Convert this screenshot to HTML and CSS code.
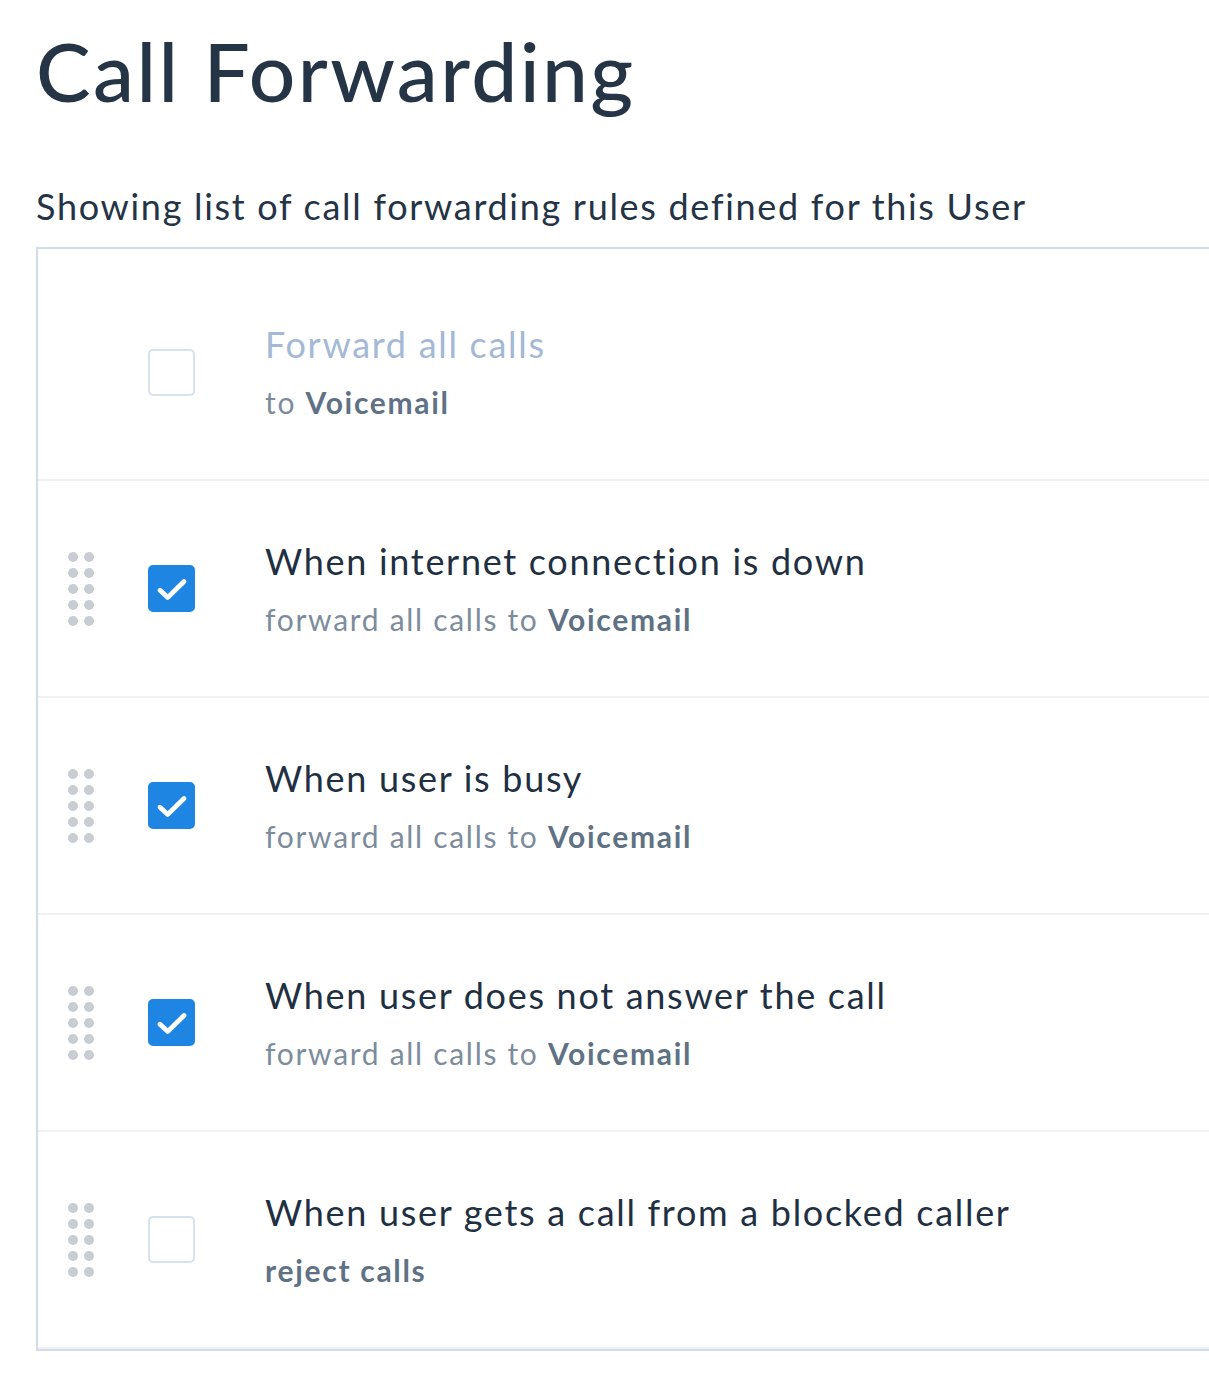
FILE: index.html
```html
<!DOCTYPE html>
<html lang="en">
<head>
    <meta charset="UTF-8">
    <meta name="viewport" content="width=device-width, initial-scale=1.0">
    <title>Call Forwarding</title>
    <link rel="stylesheet" href="styles.css">
</head>
<body>

    <header>
        <h1>Call Forwarding</h1>
        <p class="intro">Showing list of call forwarding rules defined for this User</p>
    </header>

    <section class="rules">
        <div class="rule rule-first">
            <div class="handle"></div>
            <span class="box"></span>
            <div class="text">
                <div class="title muted">Forward all calls</div>
                <div class="sub">to <b>Voicemail</b></div>
            </div>
        </div>

        <div class="rule">
            <div class="handle"><i></i><i></i><i></i><i></i><i></i><i></i><i></i><i></i><i></i><i></i></div>
            <span class="box checked">
                <svg viewBox="0 0 24 24" width="36" height="36"><polyline points="4,12.8 9.2,17.6 20,7" fill="none" stroke="#fff" stroke-width="3.2" stroke-linecap="round" stroke-linejoin="round"/></svg>
            </span>
            <div class="text">
                <div class="title">When internet connection is down</div>
                <div class="sub">forward all calls to <b>Voicemail</b></div>
            </div>
        </div>

        <div class="rule">
            <div class="handle"><i></i><i></i><i></i><i></i><i></i><i></i><i></i><i></i><i></i><i></i></div>
            <span class="box checked">
                <svg viewBox="0 0 24 24" width="36" height="36"><polyline points="4,12.8 9.2,17.6 20,7" fill="none" stroke="#fff" stroke-width="3.2" stroke-linecap="round" stroke-linejoin="round"/></svg>
            </span>
            <div class="text">
                <div class="title">When user is busy</div>
                <div class="sub">forward all calls to <b>Voicemail</b></div>
            </div>
        </div>

        <div class="rule">
            <div class="handle"><i></i><i></i><i></i><i></i><i></i><i></i><i></i><i></i><i></i><i></i></div>
            <span class="box checked">
                <svg viewBox="0 0 24 24" width="36" height="36"><polyline points="4,12.8 9.2,17.6 20,7" fill="none" stroke="#fff" stroke-width="3.2" stroke-linecap="round" stroke-linejoin="round"/></svg>
            </span>
            <div class="text">
                <div class="title">When user does not answer the call</div>
                <div class="sub">forward all calls to <b>Voicemail</b></div>
            </div>
        </div>

        <div class="rule">
            <div class="handle"><i></i><i></i><i></i><i></i><i></i><i></i><i></i><i></i><i></i><i></i></div>
            <span class="box"></span>
            <div class="text">
                <div class="title">When user gets a call from a blocked caller</div>
                <div class="sub"><b>reject calls</b></div>
            </div>
        </div>
    </section>

</body>
</html>
```

FILE: styles.css
```css
body {
    font-family: "Lato", "Open Sans", sans-serif;
    background-color: #fff;
    color: #233446;
    margin: 0;
    padding: 0 0 0 36px;
    overflow: hidden;
    letter-spacing: 1.7px;
}

h1 {
    font-size: 82px;
    font-weight: 500;
    color: #253545;
    margin: 0;
    padding-top: 20px;
    line-height: 100px;
    letter-spacing: 2.4px;
}

.intro {
    font-size: 36px;
    margin: 62px 0 0;
    line-height: 48px;
    color: #243446;
}

.rules {
    margin-top: 17px;
    margin-right: -40px;
    border-top: 2px solid #d3dcea;
    border-left: 2px solid #d3dcea;
    border-bottom: 2px solid #d3dcea;
}

.rule {
    display: flex;
    align-items: center;
    height: 215px;
    border-bottom: 2px solid #eef0f2;
}

.rule-first {
    height: 214px;
    padding-top: 16px;
}

.handle {
    width: 26px;
    margin-left: 30px;
    margin-right: 54px;
    display: grid;
    grid-template-columns: 10px 10px;
    column-gap: 6px;
    row-gap: 6px;
}

.handle i {
    display: block;
    width: 10px;
    height: 10px;
    border-radius: 50%;
    background-color: #c9ccd3;
}

.box {
    width: 47px;
    height: 47px;
    box-sizing: border-box;
    border: 2px solid #d8e1ee;
    border-radius: 5px;
    display: flex;
    align-items: center;
    justify-content: center;
    flex-shrink: 0;
}

.box.checked {
    background-color: #1e86e2;
    border-color: #1e86e2;
}

.text {
    margin-left: 70px;
}

.title {
    font-size: 36px;
    line-height: 44px;
    color: #1f3043;
}

.title.muted {
    color: #a3b9d5;
}

.sub {
    font-size: 30px;
    line-height: 40px;
    margin-top: 16px;
    color: #7d8c9c;
}

.sub b {
    color: #5f7285;
    font-weight: 700;
}
```
